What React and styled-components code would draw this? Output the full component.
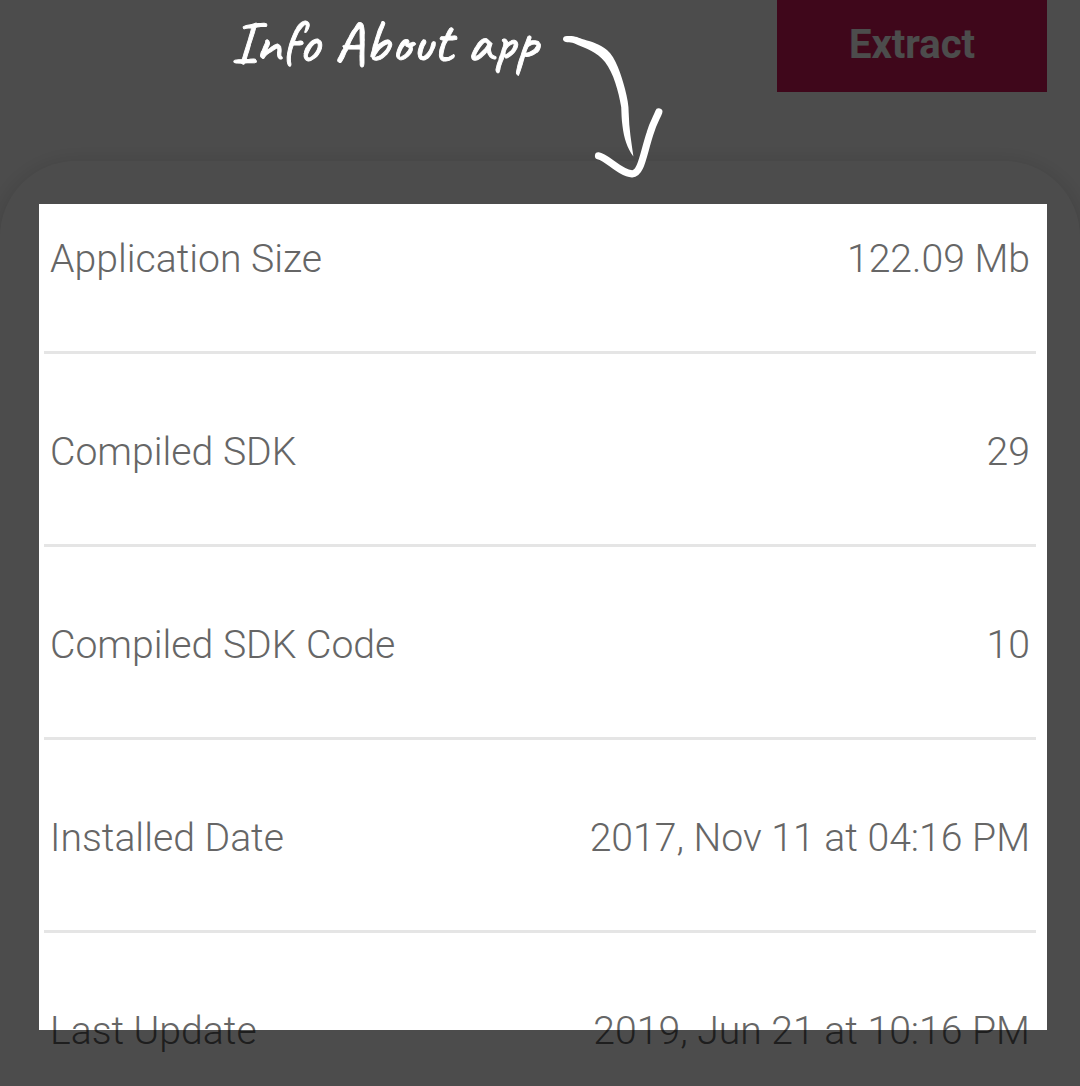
import React from "react";
import styled, { createGlobalStyle } from "styled-components";

const GlobalStyle = createGlobalStyle`
  * { box-sizing: border-box; }
  body { margin: 0; background: #4c4c4c; }
`;

const Screen = styled.main`
  position: relative;
  display: flex;
  flex-direction: column;
  width: 1080px;
  height: 1086px;
  overflow: hidden;
  background: #fff;
  font-family: Roboto, "Liberation Sans", sans-serif;
`;

const Header = styled.header`
  display: flex;
  justify-content: flex-end;
  flex: none;
  height: 161px;
  padding-right: 33px;
`;

const ExtractButton = styled.button`
  width: 270px;
  height: 92px;
  padding: 0 0 2px;
  border: 0;
  background: #d2195b;
  color: #fff;
  font: 700 40px/48px Roboto, "Liberation Sans", sans-serif;
`;

const Sheet = styled.section`
  flex: 1;
  min-height: 0;
  padding: 43px 44px 0;
  border-radius: 76px 76px 0 0;
  background: #fff;
  box-shadow: 0 4px 24px rgba(0, 0, 0, 0.17);
`;

const Row = styled.div`
  display: flex;
  justify-content: space-between;
  height: 193px;
  padding: 75px 6px 0;
  border-bottom: 3px solid #e5e5e5;
  color: #666;
  font-size: 39.15px;
  font-weight: 300;
  line-height: 46px;
  white-space: nowrap;

  &:first-child {
    height: 150px;
    padding-top: 32px;
  }
`;

const Spotlight = styled.div`
  position: absolute;
  left: 39px;
  top: 204px;
  width: 1008px;
  height: 826px;
  box-shadow: 0 0 0 1200px rgba(0, 0, 0, 0.7);
`;

const Hint = styled.div`
  position: absolute;
  left: 231px;
  top: 10px;
  display: flex;
  color: #fff;
`;

const HintText = styled.span`
  display: block;
  width: 327px;
  font: 400 59.5px/66px Caveat, "Open Sans", cursive;
  white-space: nowrap;
  -webkit-text-stroke: 0.9px #fff;
`;

const HintArrow = styled.svg`
  display: block;
  flex: none;
  width: 110px;
  height: 170px;
`;

const details = [
  ["Application Size", "122.09 Mb"],
  ["Compiled SDK", "29"],
  ["Compiled SDK Code", "10"],
  ["Installed Date", "2017, Nov 11 at 04:16 PM"],
  ["Last Update", "2019, Jun 21 at 10:16 PM"],
];

export default function App() {
  return (
    <>
      <GlobalStyle />
      <Screen>
        <Header>
          <ExtractButton>Extract</ExtractButton>
        </Header>
        <Sheet>
          {details.map(([label, value]) => (
            <Row key={label}>
              <span>{label}</span>
              <span>{value}</span>
            </Row>
          ))}
        </Sheet>
        <Spotlight />
        <Hint>
          <HintText>Info About app</HintText>
          <HintArrow viewBox="558 10 110 170">
            <path
              fill="#fff"
              d="M567 36 C575 35.5 578 37.5 584 39.5 C592 42 600 44 607 50 C616 58 621 74 625 89 C627.3 98 628.8 105 628.7 113 C629 129 631.5 143 633.4 156.5 C627 148 624 138 622.5 126 C621.5 119 621.5 113 621.2 107 C618.5 91 613.5 73 605 62 C597 51.5 586 48.5 574 43.2 C570 41.6 564 43.5 563 39.5 C562.8 37 564.5 36 567 36Z"
            />
            <path
              d="M598.5 155.8 C606 156.5 620 173.2 632 173.8 C641 174.2 643 155 650 133.5 C653 123 657 117 658.8 112"
              fill="none"
              stroke="#fff"
              strokeWidth="7.2"
              strokeLinecap="round"
              strokeLinejoin="round"
            />
          </HintArrow>
        </Hint>
      </Screen>
    </>
  );
}
